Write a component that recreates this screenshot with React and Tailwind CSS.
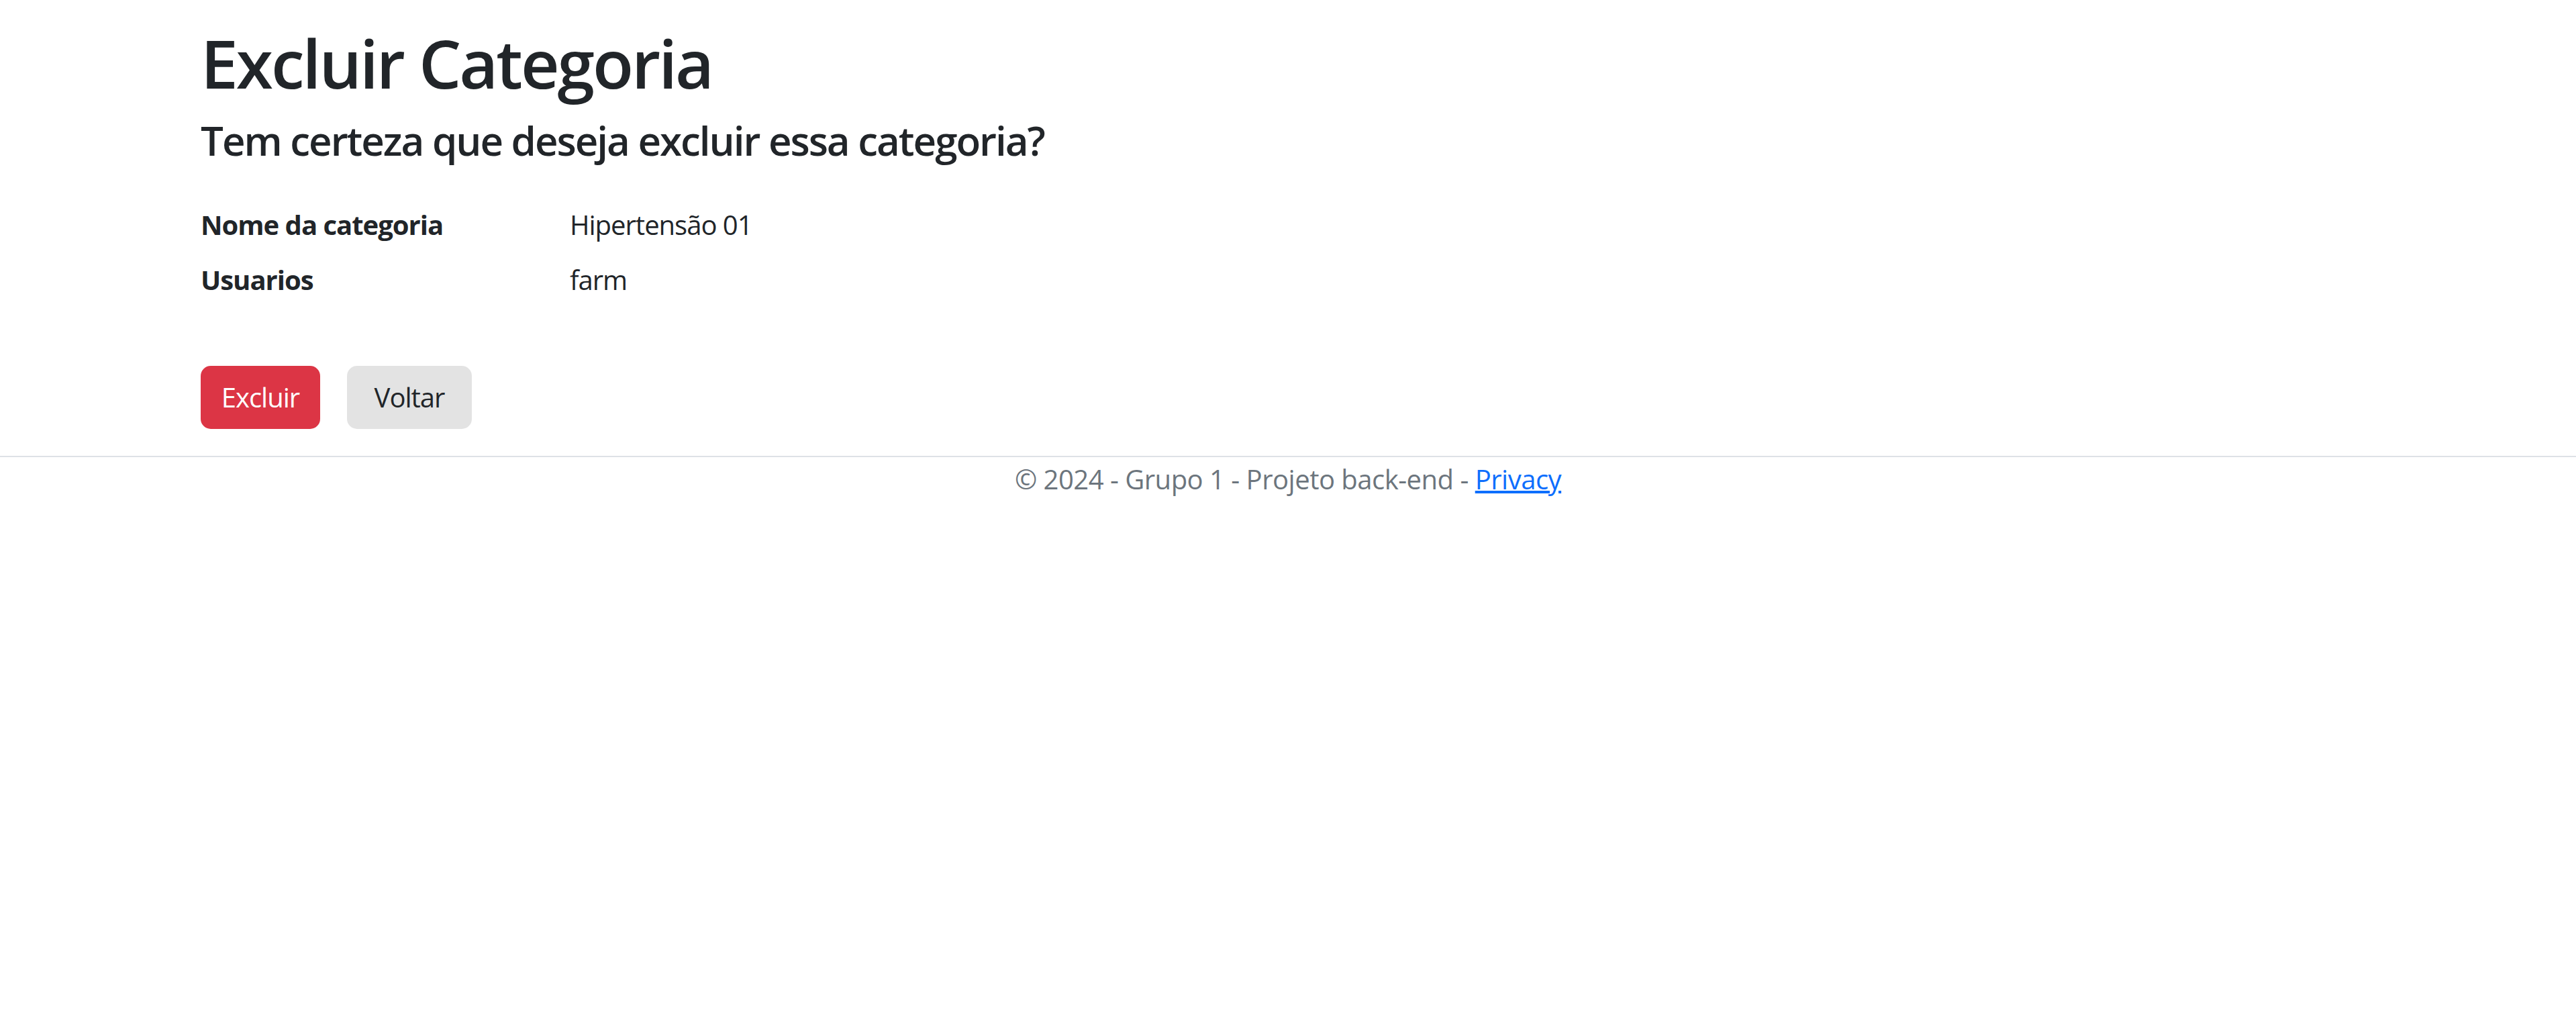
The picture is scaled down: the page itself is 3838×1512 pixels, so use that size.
export default function App() {
  return (
    <div className="min-h-screen bg-white text-[#212529] font-['Open_Sans','Noto_Sans',sans-serif]">
      <div className="w-[3300px] mx-auto px-[30px] pt-[33px]">
        <h1 className="text-[100px] leading-[120px] font-semibold tracking-[-3px]">Excluir Categoria</h1>
        <h4 className="mt-[20px] text-[60px] leading-[72px] font-semibold tracking-[-2px]">Tem certeza que deseja excluir essa categoria?</h4>

        <dl className="mt-[60px] text-[40px] leading-[60px] tracking-[-1px]">
          <div className="flex mb-[22px]">
            <dt className="w-[550px] font-bold">Nome da categoria</dt>
            <dd>Hipertensão 01</dd>
          </div>
          <div className="flex">
            <dt className="w-[550px] font-bold">Usuarios</dt>
            <dd>farm</dd>
          </div>
        </dl>

        <div className="mt-[98px] flex gap-[40px] tracking-[-1px]">
          <button className="w-[178px] h-[94px] rounded-[15px] bg-[#dc3545] text-white text-[40px] leading-[60px]">
            Excluir
          </button>
          <button className="w-[186px] h-[94px] rounded-[15px] bg-[#e3e3e3] text-[#212529] text-[40px] leading-[60px]">
            Voltar
          </button>
        </div>
      </div>

      <footer className="mt-[40px] border-t-2 border-[#dee2e6] pt-[3px] text-center text-[40px] leading-[60px] tracking-[-0.5px] text-[#6c757d]">
        © 2024 - Grupo 1 - Projeto back-end - <a href="#" className="text-[#0d6efd] underline">Privacy</a>
      </footer>
    </div>
  )
}
